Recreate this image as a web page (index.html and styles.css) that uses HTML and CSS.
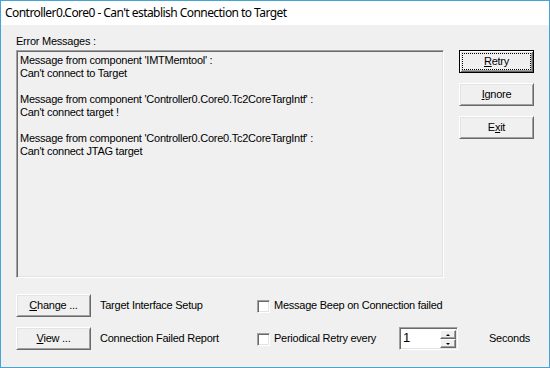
FILE: index.html
```html
<!DOCTYPE html>
<html>
<head>
<meta charset="utf-8">
<link rel="stylesheet" href="styles.css">
</head>
<body>
<div class="window">
  <div class="titlebar">Controller0.Core0 - Can't establish Connection to Target</div>
  <div class="content">
    <div class="top">
      <div class="messages">
        <div class="label">Error Messages :</div>
        <div class="msgbox">
          <p>Message from component 'IMTMemtool' :<br>Can't connect to Target</p>
          <p>Message from component 'Controller0.Core0.Tc2CoreTargIntf' :<br>Can't connect target !</p>
          <p>Message from component 'Controller0.Core0.Tc2CoreTargIntf' :<br>Can't connect JTAG target</p>
        </div>
      </div>
      <div class="actions">
        <div class="btn default"><span class="focus"><u>R</u>etry</span></div>
        <div class="btn"><span><u>I</u>gnore</span></div>
        <div class="btn"><span>E<u>x</u>it</span></div>
      </div>
    </div>
    <div class="bottom">
      <div class="btn"><span><u>C</u>hange ...</span></div>
      <div class="text pad">Target Interface Setup</div>
      <div class="check"></div>
      <div class="text wide">Message Beep on Connection failed</div>

      <div class="btn"><span><u>V</u>iew ...</span></div>
      <div class="text pad">Connection Failed Report</div>
      <div class="check"></div>
      <div class="text">Periodical Retry every</div>
      <div class="spin">
        <div class="spin-edit">1</div>
        <div class="spin-btns">
          <div class="spin-btn"><span class="arrow up"></span></div>
          <div class="spin-btn"><span class="arrow down"></span></div>
        </div>
      </div>
      <div class="text secs">Seconds</div>
    </div>
  </div>
</div>
</body>
</html>
```

FILE: styles.css
```css
* { box-sizing: border-box; }
html, body { margin: 0; padding: 0; background: #f0f0f0; }
body {
  font-family: "Liberation Sans", Arial, sans-serif;
  font-size: 11px;
  letter-spacing: -0.25px;
  color: #000;
}
.window {
  width: 550px;
  height: 368px;
  border: 1px solid #47a3d6;
  display: flex;
  flex-direction: column;
  background: #f0f0f0;
}
.titlebar {
  height: 24px;
  background: #fff;
  font-family: "Noto Sans", "Open Sans", sans-serif;
  font-size: 12px;
  letter-spacing: -0.55px;
  line-height: 24px;
  padding-left: 4px;
  white-space: nowrap;
}
.content {
  flex: 1;
  padding: 10px 0 0 15px;
}
.top {
  display: flex;
  gap: 15px;
}
.label {
  line-height: 13px;
  height: 13px;
  margin-bottom: 2px;
}
.msgbox {
  width: 428px;
  height: 228px;
  border-top: 1px solid #a0a0a0;
  border-left: 1px solid #a0a0a0;
  border-right: 1px solid #fff;
  border-bottom: 1px solid #fff;
  box-shadow: inset 1px 1px 0 #696969, inset -1px -1px 0 #e3e3e3;
  padding: 3px 3px;
  line-height: 13px;
}
.msgbox p { margin: 0 0 13px 0; }
.actions {
  margin-top: 15px;
  display: flex;
  flex-direction: column;
  gap: 10px;
}
.btn {
  width: 75px;
  height: 23px;
  background: #f0f0f0;
  border-top: 1px solid #fff;
  border-left: 1px solid #fff;
  border-right: 1px solid #696969;
  border-bottom: 1px solid #696969;
  box-shadow: inset 1px 1px 0 #e3e3e3, inset -1px -1px 0 #a0a0a0;
  display: flex;
  align-items: center;
  justify-content: center;
  line-height: 13px;
}
.btn.default {
  border: 1px solid #000;
  box-shadow: inset 1px 1px 0 #fff, inset -1px -1px 0 #696969, inset 2px 2px 0 #e3e3e3, inset -2px -2px 0 #a0a0a0;
  padding: 3px;
}
.btn .focus {
  flex: 1;
  align-self: stretch;
  display: flex;
  align-items: center;
  justify-content: center;
  outline: 1px dotted #000;
  outline-offset: 0;
}
.btn u { text-decoration-thickness: 1px; text-underline-offset: 1px; }
.bottom {
  margin-top: 16px;
  display: grid;
  grid-template-columns: 75px 166px 17px 125px 59px auto;
  grid-template-rows: 23px 23px;
  row-gap: 10px;
  align-items: center;
}
.text { line-height: 13px; white-space: nowrap; }
.text.pad { padding-left: 9px; }
.text.wide { grid-column: span 3; }
.text.secs { padding-left: 31px; }
.check {
  width: 13px;
  height: 13px;
  background: #fff;
  border-top: 1px solid #a0a0a0;
  border-left: 1px solid #a0a0a0;
  border-right: 1px solid #fff;
  border-bottom: 1px solid #fff;
  box-shadow: inset 1px 1px 0 #696969, inset -1px -1px 0 #e3e3e3;
  margin-top: 2px;
}
.spin {
  width: 59px;
  height: 23px;
  border-top: 1px solid #a0a0a0;
  border-left: 1px solid #a0a0a0;
  border-right: 1px solid #fff;
  border-bottom: 1px solid #fff;
  box-shadow: inset 1px 1px 0 #696969, inset -1px -1px 0 #e3e3e3;
  background: #fff;
  padding: 2px 1px 1px 2px;
  display: flex;
}
.spin-edit {
  flex: 1;
  font-size: 13px;
  line-height: 15px;
  padding-left: 1px;
}
.spin-btns {
  width: 16px;
  display: flex;
  flex-direction: column;
}
.spin-btn {
  flex: 1;
  background: #f0f0f0;
  border-top: 1px solid #fff;
  border-left: 1px solid #fff;
  border-right: 1px solid #696969;
  border-bottom: 1px solid #696969;
  box-shadow: inset -1px -1px 0 #a0a0a0;
  display: flex;
  align-items: center;
  justify-content: center;
}
.arrow {
  width: 0;
  height: 0;
  border-left: 2px solid transparent;
  border-right: 2px solid transparent;
}
.arrow.up { border-bottom: 2px solid #000; }
.arrow.down { border-top: 2px solid #000; }
```
